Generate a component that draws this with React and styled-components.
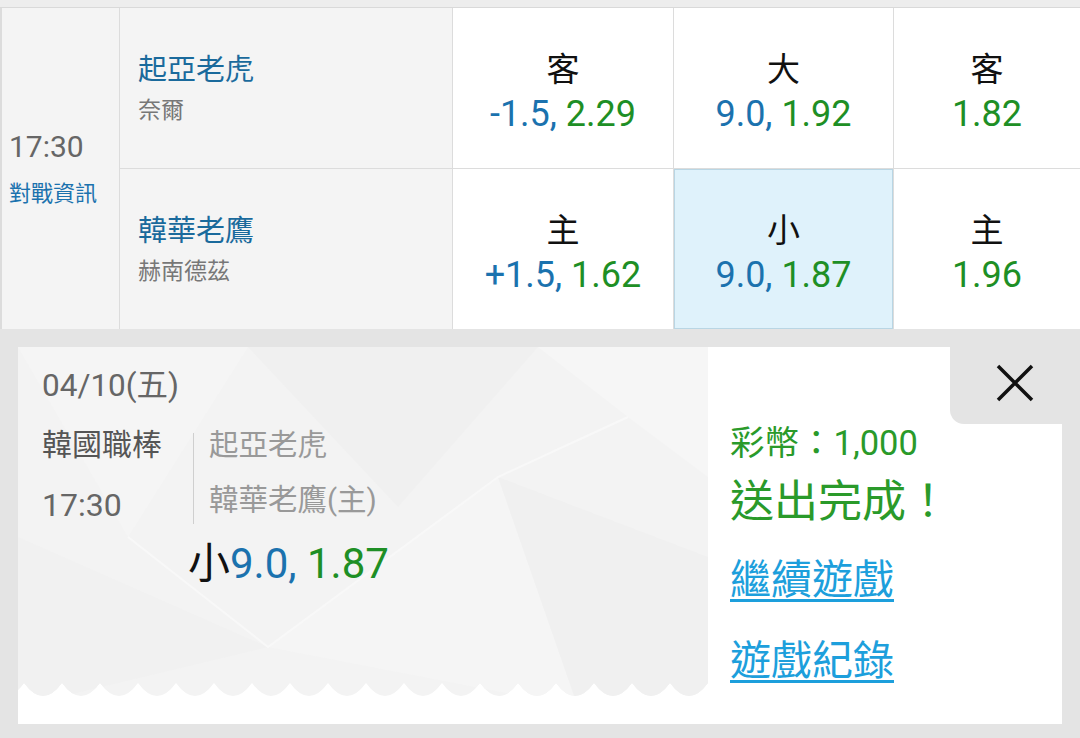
import React from "react";
import styled, { createGlobalStyle } from "styled-components";

const GlobalStyle = createGlobalStyle`
  html, body {
    margin: 0;
    padding: 0;
    background: #e4e4e4;
  }
  body {
    font-family: Roboto, "Noto Sans CJK TC", "Noto Sans", sans-serif;
  }
`;

const BLUE = "#1b72ae";
const GREEN = "#1e8f25";

const Page = styled.div`
  width: 1080px;
  height: 738px;
  overflow: hidden;
  background: #e4e4e4;
`;

const TopStrip = styled.div`
  height: 7px;
  background: #ededed;
  border-bottom: 1px solid #d9d9d9;
`;

const Table = styled.div`
  display: grid;
  grid-template-columns: 117px 332px 220px 219px 1fr;
  grid-template-rows: 160px 160px;
  gap: 1px;
  padding-left: 2px;
  background: #dcdcdc;
`;

const TimeCell = styled.div`
  grid-row: 1 / span 2;
  background: #f4f4f4;
  display: flex;
  flex-direction: column;
  justify-content: center;
  padding: 0 0 0 7px;
`;

const TimeText = styled.div`
  font-size: 30px;
  line-height: 36px;
  color: #666;
`;

const InfoLink = styled.div`
  margin-top: 15px;
  font-size: 22px;
  line-height: 28px;
  color: ${BLUE};
`;

const TeamCell = styled.div`
  background: #f4f4f4;
  display: flex;
  flex-direction: column;
  justify-content: center;
  padding-left: 18px;
`;

const TeamName = styled.div`
  font-size: 29px;
  line-height: 36px;
  color: #1a6a9c;
`;

const Pitcher = styled.div`
  margin-top: 9px;
  font-size: 23px;
  line-height: 28px;
  color: #777;
`;

const OddsCell = styled.div`
  background: ${(p) => (p.$active ? "#dff2fb" : "#fff")};
  box-shadow: ${(p) => (p.$active ? "inset 0 0 0 1px #b9d6e4" : "none")};
  display: flex;
  flex-direction: column;
  align-items: center;
  justify-content: center;
  padding-top: 8px;
`;

const OddsLabel = styled.div`
  font-size: 33px;
  line-height: 40px;
  color: #111;
`;

const OddsValue = styled.div`
  margin-top: 3px;
  font-size: 36px;
  line-height: 42px;
`;

const Blue = styled.span`
  color: ${BLUE};
`;

const Green = styled.span`
  color: ${GREEN};
`;

const Band = styled.div`
  padding: 18px 18px 14px;
`;

const Card = styled.div`
  position: relative;
  display: flex;
  height: 377px;
  background: #fff;
`;

const LeftPane = styled.div`
  position: relative;
  width: 690px;
  padding: 20px 0 0 24px;
  box-sizing: border-box;
`;

const Backdrop = styled.svg`
  position: absolute;
  left: 0;
  top: 0;
  width: 690px;
  height: 377px;
`;

const Content = styled.div`
  position: relative;
`;

const DateText = styled.div`
  font-size: 31.5px;
  line-height: 38px;
  color: #666;
`;

const InfoRow = styled.div`
  display: flex;
  margin-top: 10px;
`;

const LeagueCol = styled.div`
  width: 120px;
  font-size: 30px;
  line-height: 60px;
  color: #555;

  & > div:last-child {
    font-size: 32px;
    color: #666;
  }
`;

const Divider = styled.div`
  margin: 18px 0 11px 31px;
  border-left: 1px solid #cfcfcf;
`;

const TeamCol = styled.div`
  margin-left: 15px;
  padding-top: 3px;
  font-size: 29.5px;
  line-height: 55px;
  color: #999;
`;

const BetLine = styled.div`
  margin: 4px 0 0 146px;
  font-size: 42px;
  line-height: 50px;
  color: #111;
`;

const RightPane = styled.div`
  flex: 1;
  padding: 76px 0 0 22px;
`;

const Coins = styled.div`
  font-size: 34.5px;
  line-height: 40px;
  color: #2a9a2a;
`;

const Done = styled.div`
  margin-top: 13px;
  font-size: 44px;
  line-height: 52px;
  color: #2a9a2a;
`;

const ActionLink = styled.a`
  display: block;
  margin-top: ${(p) => p.$gap}px;
  font-size: 41px;
  line-height: 50px;
  color: #1d9fdc;
  text-decoration: underline;
  text-decoration-thickness: 3px;
  text-underline-offset: 5px;
`;

const CloseTab = styled.div`
  position: absolute;
  top: 0;
  right: 0;
  width: 112px;
  height: 77px;
  box-sizing: border-box;
  padding: 0 0 5px 18px;
  background: #e4e4e4;
  border-bottom-left-radius: 14px;
  display: flex;
  align-items: center;
  justify-content: center;
`;

const zigzag = (() => {
  let d = "M0 0 H690 V336";
  for (let x = 690; x > -38; x -= 38) {
    d += ` Q${x - 19} 362 ${x - 38} 336`;
  }
  return d + " Z";
})();

const Pattern = () => (
  <Backdrop viewBox="0 0 690 377">
    <defs>
      <clipPath id="zig">
        <path d={zigzag} />
      </clipPath>
    </defs>
    <g clipPath="url(#zig)">
      <rect width="690" height="377" fill="#f3f3f3" />
      <polygon points="0,0 230,0 110,190" fill="#f5f5f5" />
      <polygon points="230,0 520,0 380,160" fill="#f0f0f0" />
      <polygon points="520,0 690,0 690,130 610,70" fill="#f6f6f6" />
      <polygon points="0,190 250,300 0,360" fill="#f1f1f1" />
      <polygon points="250,300 480,130 560,360" fill="#f5f5f5" />
      <polygon points="480,130 690,210 690,360 560,360" fill="#f0f0f0" />
      <polyline points="110,190 250,300 480,130 610,70" fill="none" stroke="#f8f8f8" strokeWidth="2" />
    </g>
  </Backdrop>
);

const CloseIcon = () => (
  <svg width="38" height="38" viewBox="0 0 38 38">
    <path d="M2 2 L36 36 M36 2 L2 36" stroke="#111" strokeWidth="3.5" fill="none" />
  </svg>
);

const rows = [
  {
    team: "起亞老虎",
    pitcher: "奈爾",
    odds: [
      { label: "客", line: "-1.5, ", price: "2.29" },
      { label: "大", line: "9.0, ", price: "1.92" },
      { label: "客", line: "", price: "1.82" },
    ],
  },
  {
    team: "韓華老鷹",
    pitcher: "赫南德茲",
    odds: [
      { label: "主", line: "+1.5, ", price: "1.62" },
      { label: "小", line: "9.0, ", price: "1.87", active: true },
      { label: "主", line: "", price: "1.96" },
    ],
  },
];

export default function App() {
  return (
    <Page>
      <GlobalStyle />
      <TopStrip />
      <Table>
        <TimeCell>
          <TimeText>17:30</TimeText>
          <InfoLink>對戰資訊</InfoLink>
        </TimeCell>
        {rows.map((r) => (
          <React.Fragment key={r.team}>
            <TeamCell>
              <TeamName>{r.team}</TeamName>
              <Pitcher>{r.pitcher}</Pitcher>
            </TeamCell>
            {r.odds.map((o, i) => (
              <OddsCell key={i} $active={o.active}>
                <OddsLabel>{o.label}</OddsLabel>
                <OddsValue>
                  {o.line && <Blue>{o.line}</Blue>}
                  <Green>{o.price}</Green>
                </OddsValue>
              </OddsCell>
            ))}
          </React.Fragment>
        ))}
      </Table>
      <Band>
        <Card>
          <LeftPane>
            <Pattern />
            <Content>
              <DateText>04/10(五)</DateText>
              <InfoRow>
                <LeagueCol>
                  <div>韓國職棒</div>
                  <div>17:30</div>
                </LeagueCol>
                <Divider />
                <TeamCol>
                  <div>起亞老虎</div>
                  <div>韓華老鷹(主)</div>
                </TeamCol>
              </InfoRow>
              <BetLine>
                小<Blue>9.0, </Blue>
                <Green>1.87</Green>
              </BetLine>
            </Content>
          </LeftPane>
          <RightPane>
            <Coins>彩幣：1,000</Coins>
            <Done>送出完成！</Done>
            <ActionLink href="#" $gap={27}>繼續遊戲</ActionLink>
            <ActionLink href="#" $gap={31}>遊戲紀錄</ActionLink>
          </RightPane>
          <CloseTab>
            <CloseIcon />
          </CloseTab>
        </Card>
      </Band>
    </Page>
  );
}
